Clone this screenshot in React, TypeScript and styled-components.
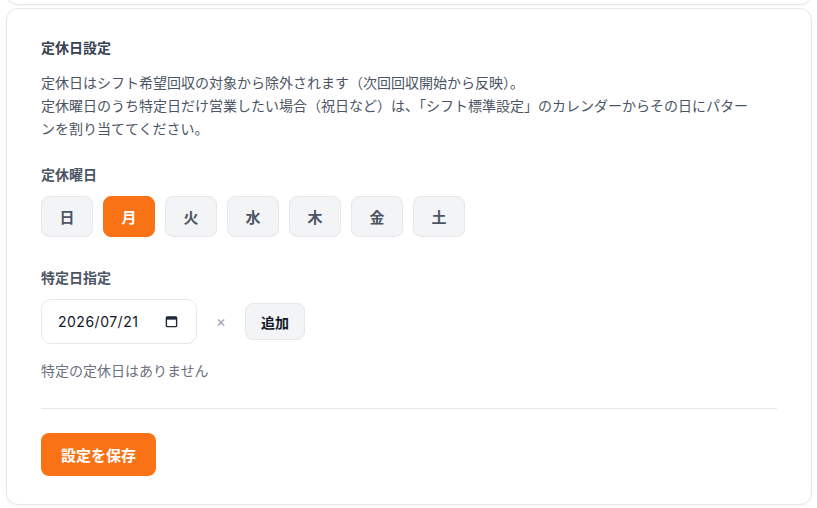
import styled, { createGlobalStyle } from 'styled-components';

const GlobalStyle = createGlobalStyle`
  html, body {
    margin: 0;
    padding: 0;
    background: #ffffff;
  }
  body {
    font-family: 'Inter', 'Noto Sans CJK JP', sans-serif;
    color: #374151;
  }
`;

const Page = styled.div`
  height: 508px;
  overflow: hidden;
  padding: 0 5px 0 6px;
  display: flex;
  flex-direction: column;
  gap: 3px;
`;

const Card = styled.section<{ $stub?: boolean }>`
  background: #ffffff;
  border: 1px solid #e5e7eb;
  border-radius: 12px;
  box-shadow: 0 1px 2px rgba(0, 0, 0, 0.04);
  padding: ${(p) => (p.$stub ? '0' : '28px 34px 28px')};
  height: ${(p) => (p.$stub ? '40px' : 'auto')};
  margin-top: ${(p) => (p.$stub ? '-37px' : '0')};
  flex-shrink: 0;
`;

const Title = styled.h2`
  margin: 0 0 14px;
  font-size: 14px;
  line-height: 20px;
  font-weight: 700;
  color: #374151;
  font-family: 'Noto Sans CJK JP', sans-serif;
`;

const Description = styled.p`
  margin: 0;
  max-width: 715px;
  font-size: 14px;
  line-height: 23px;
  color: #4b5563;
  font-family: 'Noto Sans CJK JP', sans-serif;
`;

const Section = styled.div<{ $top: number }>`
  margin-top: ${(p) => p.$top}px;
  display: flex;
  flex-direction: column;
  gap: 12px;
`;

const Label = styled.div`
  font-size: 14px;
  line-height: 20px;
  font-weight: 700;
  color: #4b5563;
  font-family: 'Noto Sans CJK JP', sans-serif;
`;

const DayRow = styled.div`
  display: flex;
  gap: 10px;
`;

const DayButton = styled.button<{ $active?: boolean }>`
  width: 52px;
  height: 41px;
  border-radius: 8px;
  border: 1px solid ${(p) => (p.$active ? '#f97316' : '#e5e7eb')};
  background: ${(p) => (p.$active ? '#f97316' : '#f3f4f6')};
  color: ${(p) => (p.$active ? '#ffffff' : '#4b5563')};
  font-family: 'Noto Sans CJK JP', sans-serif;
  font-size: 15px;
  font-weight: 700;
  padding: 0;
  cursor: pointer;
`;

const DateRow = styled.div`
  display: flex;
  align-items: center;
  gap: 19px;
`;

const DateField = styled.div`
  width: 156px;
  height: 45px;
  box-sizing: border-box;
  border: 1px solid #e5e7eb;
  border-radius: 10px;
  display: flex;
  align-items: center;
  justify-content: space-between;
  padding: 0 18px 0 16px;
  font-family: 'Inter', 'Roboto', sans-serif;
  font-size: 14px;
  letter-spacing: 0.5px;
  color: #111827;
`;

const Times = styled.span`
  font-size: 15px;
  color: #9ca3af;
  font-family: 'Inter', sans-serif;
`;

const AddButton = styled.button`
  height: 37px;
  padding: 0 15px;
  border-radius: 8px;
  border: 1px solid #e5e7eb;
  background: #f3f4f6;
  color: #111827;
  font-family: 'Noto Sans CJK JP', sans-serif;
  font-size: 14px;
  font-weight: 700;
  cursor: pointer;
`;

const EmptyText = styled.div`
  margin-top: 4px;
  font-size: 14px;
  line-height: 20px;
  color: #6b7280;
  font-family: 'Noto Sans CJK JP', sans-serif;
`;

const Divider = styled.hr`
  margin: 28px 0 24px;
  border: none;
  border-top: 1px solid #e5e7eb;
`;

const SaveButton = styled.button`
  height: 43px;
  padding: 0 20px;
  border: none;
  border-radius: 8px;
  background: #f97316;
  color: #ffffff;
  font-family: 'Noto Sans CJK JP', sans-serif;
  font-size: 15px;
  font-weight: 700;
  cursor: pointer;
`;

const CalendarIcon = () => (
  <svg width="13" height="13" viewBox="0 0 14 14" fill="none">
    <rect x="1.5" y="2" width="11" height="10.5" rx="1" stroke="#1f2937" strokeWidth="1.5" />
    <rect x="1.5" y="2" width="11" height="3" fill="#1f2937" />
  </svg>
);

const days = ['日', '月', '火', '水', '木', '金', '土'];

const App = () => {
  const closed = ['月'];

  return (
    <>
      <GlobalStyle />
      <Page>
        <Card $stub />
        <Card>
          <Title>定休日設定</Title>
          <Description>
            定休日はシフト希望回収の対象から除外されます（次回回収開始から反映）。
            <br />
            定休曜日のうち特定日だけ営業したい場合（祝日など）は、「シフト標準設定」のカレンダーからその日にパターンを割り当ててください。
          </Description>

          <Section $top={24}>
            <Label>定休曜日</Label>
            <DayRow>
              {days.map((d) => (
                <DayButton key={d} $active={closed.includes(d)}>
                  {d}
                </DayButton>
              ))}
            </DayRow>
          </Section>

          <Section $top={30}>
            <Label>特定日指定</Label>
            <DateRow>
              <DateField>
                <span>2026/07/21</span>
                <CalendarIcon />
              </DateField>
              <Times>×</Times>
              <AddButton>追加</AddButton>
            </DateRow>
            <EmptyText>特定の定休日はありません</EmptyText>
          </Section>

          <Divider />
          <SaveButton>設定を保存</SaveButton>
        </Card>
        <Card $stub style={{ marginTop: 0 }} />
      </Page>
    </>
  );
};

export default App;
